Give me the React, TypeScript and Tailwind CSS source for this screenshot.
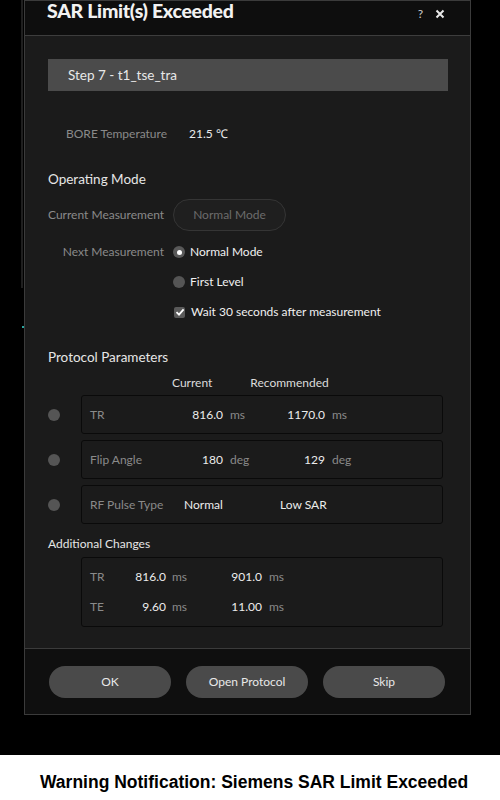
const ui = { fontFamily: "Lato, 'Open Sans', sans-serif" };

const rows = [
  { label: "TR", cur: "816.0", curUnit: "ms", rec: "1170.0", recUnit: "ms" },
  { label: "Flip Angle", cur: "180", curUnit: "deg", rec: "129", recUnit: "deg" },
];

const extra = [
  { label: "TR", cur: "816.0", rec: "901.0" },
  { label: "TE", cur: "9.60", rec: "11.00" },
];

function Bullet() {
  return <div className="w-[12px] h-[12px] rounded-full bg-[#555555] shrink-0" />;
}

export default function App() {
  return (
    <div className="w-[500px] h-[800px] bg-white" style={ui}>
      <div className="h-[755px] bg-black flex">
        {/* edge of the application behind the dialog */}
        <div className="w-[24px] shrink-0 flex flex-col">
          <div className="ml-[21px] w-[2px] h-[288px] bg-[#1f1f1f]" />
          <div className="ml-[22px] mt-[38px] w-[2px] h-[2px] bg-[#2aa6a0]" />
        </div>

        <div className="w-[447px] h-[715px] border border-[#3b3b3b] flex flex-col">
          {/* header */}
          <div className="h-[35px] shrink-0 bg-[#0e0e0e] border-b border-[#3d3d3d] flex items-start pl-[22px] pr-[25px]">
            <div className="text-[19.5px] leading-[20px] font-black tracking-[-0.3px] text-[#f2f2f2]">SAR Limit(s) Exceeded</div>
            <div className="ml-auto flex items-center gap-[12px] mt-[5px] text-[#cfcfcf]">
              <span className="text-[12px] leading-[16px]">?</span>
              <svg width="10" height="10" viewBox="0 0 10 10">
                <path d="M1.5 1.5 L8.5 8.5 M8.5 1.5 L1.5 8.5" stroke="#e8e8e8" strokeWidth="2" />
              </svg>
            </div>
          </div>

          {/* body */}
          <div className="flex-1 bg-[#1b1b1b] pl-[23px] pr-[22px] pt-[23px] whitespace-nowrap">
            <div className="h-[32px] bg-[#4b4b4b] flex items-center pl-[20px] text-[13.5px] text-[#e8e8e8]">
              Step 7 - t1_tse_tra
            </div>

            <div className="mt-[33px] h-[20px] flex items-center pl-[18px] text-[12px]">
              <span className="w-[123px] text-[#8a8a8a]">BORE Temperature</span>
              <span className="text-[#ececec]">21.5 ℃</span>
            </div>

            <div className="mt-[25px] h-[20px] flex items-center text-[13.5px] text-[#e6e6e6]">Operating Mode</div>

            <div className="mt-[10px] flex items-center text-[12px]">
              <span className="w-[116px] text-right text-[#8a8a8a]">Current Measurement</span>
              <span className="ml-[9px] w-[113px] h-[32px] rounded-full border border-[#353535] bg-[#1f1f1f] flex items-center justify-center text-[#6c6c6c]">
                Normal Mode
              </span>
            </div>

            <div className="mt-[11px] h-[20px] flex items-center text-[12px]">
              <span className="w-[116px] text-right text-[#8a8a8a]">Next Measurement</span>
              <span className="ml-[9px] w-[12px] h-[12px] rounded-full bg-[#595959] flex items-center justify-center">
                <span className="w-[5px] h-[5px] rounded-full bg-white" />
              </span>
              <span className="ml-[5px] text-[#f0f0f0]">Normal Mode</span>
            </div>

            <div className="mt-[10px] h-[20px] flex items-center text-[12px] pl-[125px]">
              <span className="w-[12px] h-[12px] rounded-full bg-[#555555]" />
              <span className="ml-[5px] text-[#f0f0f0]">First Level</span>
            </div>

            <div className="mt-[10px] h-[20px] flex items-center text-[12px] pl-[126px]">
              <span className="w-[11px] h-[11px] rounded-[2px] bg-[#5a5a5a] flex items-center justify-center">
                <svg width="10" height="10" viewBox="0 0 10 10">
                  <path d="M1.5 5.2 L4 7.6 L8.6 2.4" stroke="#ffffff" strokeWidth="1.8" fill="none" />
                </svg>
              </span>
              <span className="ml-[6px] text-[#f0f0f0]">Wait 30 seconds after measurement</span>
            </div>

            <div className="mt-[25px] h-[20px] flex items-center text-[13.5px] text-[#e6e6e6]">Protocol Parameters</div>

            <div className="mt-[6px] h-[20px] flex items-center text-[12px] text-[#dcdcdc]">
              <span className="ml-[124px]">Current</span>
              <span className="ml-[38px]">Recommended</span>
            </div>

            <div className="mt-[2px] mr-[5px] flex flex-col gap-[6px]">
              {rows.map((r) => (
                <div key={r.label} className="flex items-center">
                  <Bullet />
                  <div className="ml-[21px] flex-1 h-[39px] rounded-[3px] border border-[#0a0a0a] flex items-center pl-[8px] text-[12px]">
                    <span className="w-[94px] text-[#8a8a8a]">{r.label}</span>
                    <span className="w-[39px] text-right text-[#ececec]">{r.cur}</span>
                    <span className="ml-[7px] w-[50px] text-[#8a8a8a]">{r.curUnit}</span>
                    <span className="w-[45px] text-right text-[#ececec]">{r.rec}</span>
                    <span className="ml-[7px] text-[#8a8a8a]">{r.recUnit}</span>
                  </div>
                </div>
              ))}
              <div className="flex items-center">
                <Bullet />
                <div className="ml-[21px] flex-1 h-[39px] rounded-[3px] border border-[#0a0a0a] flex items-center pl-[8px] text-[12px]">
                  <span className="w-[94px] text-[#8a8a8a]">RF Pulse Type</span>
                  <span className="w-[96px] text-[#ececec]">Normal</span>
                  <span className="text-[#ececec]">Low SAR</span>
                </div>
              </div>
            </div>

            <div className="mt-[10px] h-[20px] flex items-center text-[12px] text-[#e6e6e6]">Additional Changes</div>

            <div className="mt-[3px] ml-[33px] mr-[5px] h-[70px] rounded-[3px] border border-[#0a0a0a] flex flex-col justify-center gap-[10px] pl-[8px] text-[12px]">
              {extra.map((r) => (
                <div key={r.label} className="h-[20px] flex items-center">
                  <span className="w-[40px] text-[#8a8a8a]">{r.label}</span>
                  <span className="w-[36px] text-right text-[#ececec]">{r.cur}</span>
                  <span className="ml-[6px] w-[50px] text-[#8a8a8a]">ms</span>
                  <span className="w-[40px] text-right text-[#ececec]">{r.rec}</span>
                  <span className="ml-[7px] text-[#8a8a8a]">ms</span>
                </div>
              ))}
            </div>
          </div>

          {/* footer */}
          <div className="h-[66px] shrink-0 bg-[#0f0f0f] border-t border-[#3b3b3b] flex items-start pt-[17px] pl-[24px] gap-[15px]">
            {["OK", "Open Protocol", "Skip"].map((b) => (
              <button key={b} className="w-[122px] h-[32px] rounded-full bg-[#4a4a4a] text-[12px] text-[#e8e8e8]">
                {b}
              </button>
            ))}
          </div>
        </div>
      </div>

      <div
        className="pl-[40px] pt-[17px] text-[17.5px] leading-[20px] font-bold text-black"
        style={{ fontFamily: "'Liberation Sans', Arial, sans-serif" }}
      >
        Warning Notification: Siemens SAR Limit Exceeded
      </div>
    </div>
  );
}
